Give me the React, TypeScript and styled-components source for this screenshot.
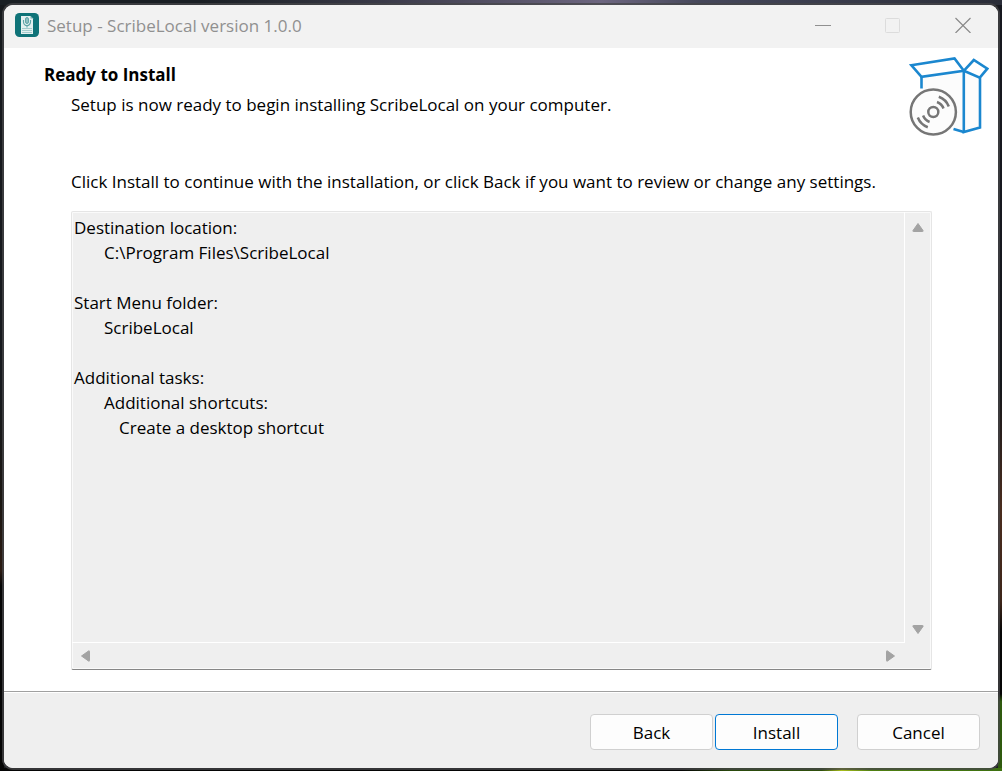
import React from "react";
import styled, { createGlobalStyle, css } from "styled-components";

const Global = createGlobalStyle`
  *, *::before, *::after { box-sizing: border-box; }
  body {
    margin: 0;
    font-family: "Open Sans", "Segoe UI", sans-serif;
    font-size: 17px;
    line-height: 25px;
    color: #000;
  }
`;

const Desktop = styled.div`
  min-height: 100vh;
  padding: 5px 4px 3px;
  display: flex;
  background:
    linear-gradient(90deg, #050505 0 68%, #2a4a0c 73%, #2f4f0c 82%, #a9bd1c 84%, #4f7f12 87%, #3d7010) bottom / 100% 3px no-repeat,
    linear-gradient(90deg, #1a1f24 0 20%, #3a3a48 38%, #6d6680 60%, #45475a 70%, #2a2d38) top / 100% 5px no-repeat,
    linear-gradient(#16181f 0 30%, #14161a 50%, #4a2c1e 66%, #3d2519 78%, #050505 82% 90%, #2f5a0e 91%) right / 4px 100% no-repeat,
    linear-gradient(#16191d 0 50%, #1a1612 65%, #2a1a12 74%, #050505 76%) left / 4px 100% no-repeat,
    #1c1d20;
`;

const Window = styled.main`
  flex: 1;
  display: flex;
  flex-direction: column;
  background: #fff;
  border-radius: 9px;
  overflow: hidden;
  box-shadow: 0 0 0 2px rgba(70, 70, 72, 0.75);
`;

const TitleBar = styled.header`
  height: 43px;
  padding: 0 0 3px 11px;
  display: flex;
  align-items: center;
  gap: 8px;
  background: #f2f2f2;
  color: #909090;
`;

const TitleText = styled.span`
  flex: 1;
`;

const CaptionButtons = styled.div`
  display: flex;
`;

const CaptionButton = styled.button`
  width: 70px;
  height: 40px;
  padding: 0;
  border: 0;
  display: grid;
  place-items: center;
  background: transparent;
`;

const Banner = styled.section`
  padding: 9px 9px 0 40px;
  display: flex;
  justify-content: space-between;
  align-items: flex-start;
`;

const Heading = styled.h1`
  margin: 5px 0;
  font-size: 17px;
  line-height: 25px;
  font-weight: 700;
`;

const Subheading = styled.p`
  margin: 0 0 0 27px;
`;

const Content = styled.section`
  flex: 1;
  padding: 32px 66px 21px 67px;
  display: flex;
  flex-direction: column;
  gap: 17px;
`;

const Memo = styled.div`
  flex: 1;
  display: grid;
  grid-template: 1fr 26px / 1fr 26px;
  background: #efefef;
  border: 1px solid #e5e5e5;
  border-bottom-color: #868686;
  border-radius: 2px;
  box-shadow: inset 0 0 0 1px #fafafa;
`;

const MemoText = styled.textarea`
  padding: 3px 2px;
  border: 0;
  border-right: 1px solid #fff;
  border-bottom: 1px solid #fff;
  outline: 0;
  resize: none;
  overflow: hidden;
  background: transparent;
  color: #000;
  font: inherit;
  tab-size: 15px;
`;

const ScrollTrack = styled.div<{ $vertical?: boolean }>`
  display: flex;
  justify-content: space-between;
  align-items: center;
  ${({ $vertical }) =>
    $vertical
      ? css`
          flex-direction: column;
          padding: 7px 0 4px;
        `
      : css`
          padding: 0 5px;
        `}
`;

const ScrollButton = styled.button`
  width: 18px;
  height: 18px;
  padding: 0;
  border: 0;
  display: grid;
  place-items: center;
  background: transparent;
`;

const Footer = styled.footer`
  padding: 22px 18px 18px;
  display: flex;
  justify-content: flex-end;
  gap: 2px;
  background: #efefef;
  border-top: 1px solid #a0a0a0;
  box-shadow: inset 0 1px #fff;
`;

const PushButton = styled.button<{ $primary?: boolean; $apart?: boolean }>`
  width: 123px;
  height: 36px;
  padding: 0;
  border: 1px solid ${({ $primary }) => ($primary ? "#0078d4" : "#d0d0d0")};
  border-radius: 4px;
  background: #fdfdfd;
  color: #000;
  font: inherit;
  ${({ $apart }) => $apart && "margin-left: 17px;"}
`;

const AppLogo = () => (
  <svg width="24" height="24" viewBox="0 0 24 24" aria-hidden="true">
    <rect width="24" height="24" rx="4.500" fill="#0f7378" />
    <path d="M6 3h9.500l2.500 2.500v15.500H6z" fill="#e4f0f0" />
    <path d="M15.500 3v2.500h2.500z" fill="#6fabae" />
    <rect x="10.500" y="4.500" width="3" height="6" rx="1.500" fill="#8fc0c2" stroke="#4d999d" strokeWidth=".8" />
    <path d="M8.500 7v2a3.500 3.500 0 0 0 7 0V7M12 12.500V14.500" fill="none" stroke="#5fa5a8" strokeWidth="1.200" />
    <path d="M7 15.500h10M7 17.500h10M7 19.500h10" stroke="#a3cccd" />
  </svg>
);

const SetupArt = () => (
  <svg width="80" height="80" viewBox="0 0 80 80" fill="none" aria-hidden="true">
    <g stroke="#1b87cf" strokeWidth="2.600">
      <path d="M13 18 55 14v60l-10-3V50L13 32z" fill="#fcfcfc" stroke="none" />
      <path d="M2.300 8.200 45.500 1.500l9.300 12.300-42.300 6z" fill="#fff" />
      <path d="M12.500 20v11.500" />
      <path d="M54.800 13.800v61.200l16.200-4.500V21" fill="#fcfcfc" />
      <path d="m54.800 13.800 10-10.800L78.300 11.700 70.800 20.700z" fill="#fff" />
      <path d="m44.500 72 10.300 3" />
    </g>
    <g stroke="#767676" strokeWidth="2.500">
      <circle cx="24.300" cy="55" r="22.600" fill="#fcfcfc" />
      <circle cx="24.300" cy="55" r="5" />
      <path d="M28 45a11 11 0 0 1 6.500 6.500M29.800 39.800a17 17 0 0 1 10 9.700M20.600 65a11 11 0 0 1-6.500-6.500M18.800 70.200a17 17 0 0 1-10-9.700" />
    </g>
  </svg>
);

const arrows = {
  up: "M6 1.500 11 8.500Q11.500 9.500 10.500 9.500H1.500Q.5 9.500 1 8.500Z",
  down: "M6 9.500 11 2.500Q11.500 1.500 10.500 1.500H1.500Q.5 1.500 1 2.500Z",
  left: "M1.500 6 8.500 1Q9.500.5 9.500 1.500V10.500Q9.500 11.500 8.500 11Z",
  right: "M9.500 6 2.500 1Q1.500.5 1.500 1.500V10.500Q1.500 11.500 2.500 11Z",
};

const Arrow = ({ direction }: { direction: keyof typeof arrows }) => (
  <ScrollButton type="button" aria-label={`Scroll ${direction}`}>
    <svg width="12" height="12" viewBox="0 0 12 12" aria-hidden="true">
      <path d={arrows[direction]} fill="#a3a3a3" stroke="#a3a3a3" strokeLinejoin="round" />
    </svg>
  </ScrollButton>
);

const summary = [
  "Destination location:",
  "\t\tC:\\Program Files\\ScribeLocal",
  "",
  "Start Menu folder:",
  "\t\tScribeLocal",
  "",
  "Additional tasks:",
  "\t\tAdditional shortcuts:",
  "\t\t\tCreate a desktop shortcut",
].join("\n");

export default function App() {
  return (
    <>
      <Global />
      <Desktop>
        <Window>
          <TitleBar>
            <AppLogo />
            <TitleText>Setup - ScribeLocal version 1.0.0</TitleText>
            <CaptionButtons>
              <CaptionButton type="button" aria-label="Minimize">
                <svg width="16" height="16" viewBox="0 0 16 16" stroke="#909090">
                  <path d="M0 8.500h16" />
                </svg>
              </CaptionButton>
              <CaptionButton type="button" aria-label="Maximize" disabled>
                <svg width="16" height="16" viewBox="0 0 16 16" fill="none" stroke="#dcdcdc">
                  <rect x=".5" y="1.500" width="14" height="14" rx="1" />
                </svg>
              </CaptionButton>
              <CaptionButton type="button" aria-label="Close">
                <svg width="16" height="16" viewBox="0 0 16 16" stroke="#8a8a8a" strokeWidth="1.200">
                  <path d="m.5 1 15 15M15.500 1l-15 15" />
                </svg>
              </CaptionButton>
            </CaptionButtons>
          </TitleBar>
          <Banner>
            <div>
              <Heading>Ready to Install</Heading>
              <Subheading>Setup is now ready to begin installing ScribeLocal on your computer.</Subheading>
            </div>
            <SetupArt />
          </Banner>
          <Content>
            <label htmlFor="summary">
              Click Install to continue with the installation, or click Back if you want to review or change any
              settings.
            </label>
            <Memo>
              <MemoText id="summary" readOnly wrap="off" spellCheck={false} defaultValue={summary} />
              <ScrollTrack $vertical>
                <Arrow direction="up" />
                <Arrow direction="down" />
              </ScrollTrack>
              <ScrollTrack>
                <Arrow direction="left" />
                <Arrow direction="right" />
              </ScrollTrack>
            </Memo>
          </Content>
          <Footer>
            <PushButton type="button">Back</PushButton>
            <PushButton type="button" $primary>
              Install
            </PushButton>
            <PushButton type="button" $apart>
              Cancel
            </PushButton>
          </Footer>
        </Window>
      </Desktop>
    </>
  );
}
